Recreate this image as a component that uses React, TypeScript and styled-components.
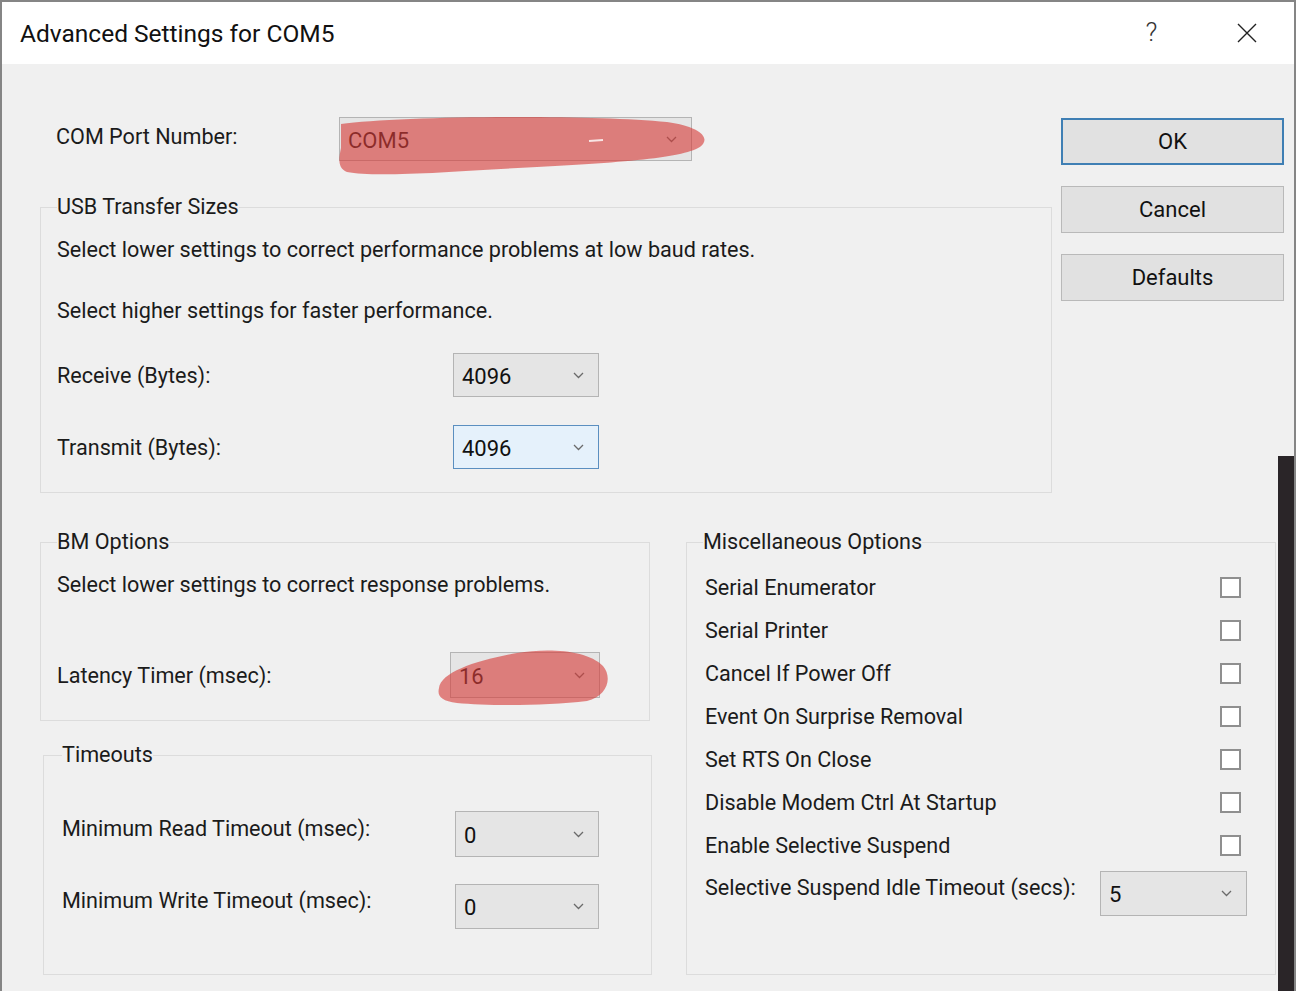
import React from "react";
import styled, { createGlobalStyle } from "styled-components";

const GlobalStyle = createGlobalStyle`
  html, body {
    margin: 0;
    padding: 0;
    background: #f0f0f0;
  }
  body {
    font-family: Roboto, "Segoe UI", "Noto Sans", sans-serif;
    color: #1b1b1b;
  }
  * {
    box-sizing: border-box;
  }
`;

const miscOptions = [
  "Serial Enumerator",
  "Serial Printer",
  "Cancel If Power Off",
  "Event On Surprise Removal",
  "Set RTS On Close",
  "Disable Modem Ctrl At Startup",
  "Enable Selective Suspend",
];

const Chevron = () => (
  <svg width="11" height="7" viewBox="0 0 11 7">
    <path d="M1 1 L5.5 5.5 L10 1" fill="none" stroke="#6a6a6a" strokeWidth="1.3" />
  </svg>
);

// red marker scribbles someone drew over the screenshot
const ComScribble = () => (
  <ScribbleSvg width="372" height="66" viewBox="0 0 372 66" style={{ left: -3, top: -4 }}>
    <path
      d="M4 10 C60 2, 250 0, 330 8 C360 12, 372 22, 366 30 C358 42, 300 48, 200 53 C120 57, 40 64, 10 58 C0 54, 2 44, 4 34 Z"
      fill="rgba(214, 62, 58, 0.62)"
    />
    <path d="M252 27 L266 26" stroke="rgba(255,255,255,0.8)" strokeWidth="2" />
  </ScribbleSvg>
);

const LatencyScribble = () => (
  <ScribbleSvg width="174" height="60" viewBox="0 0 174 60" style={{ left: -14, top: -5 }}>
    <path
      d="M2 40 C4 24, 40 12, 80 5 C112 0, 150 2, 166 18 C176 30, 170 48, 150 53 C110 58, 50 58, 20 55 C4 53, 0 48, 2 40 Z"
      fill="rgba(214, 62, 58, 0.62)"
    />
  </ScribbleSvg>
);

const Combo: React.FC<{ value: string; width: number; height?: number; focused?: boolean; children?: React.ReactNode }> = ({
  value,
  width,
  height = 44,
  focused,
  children,
}) => (
  <ComboBox $w={width} $h={height} $focused={focused}>
    <ComboValue>{value}</ComboValue>
    <Chevron />
    {children}
  </ComboBox>
);

const App: React.FC = () => {
  return (
    <>
      <GlobalStyle />
      <Window>
        <TitleBar>
          <Title>Advanced Settings for COM5</Title>
          <TitleButtons>
            <TitleButton>
              <HelpGlyph>?</HelpGlyph>
            </TitleButton>
            <TitleButton>
              <svg width="20" height="20" viewBox="0 0 20 20">
                <path d="M1 1 L19 19 M19 1 L1 19" stroke="#222" strokeWidth="1.4" />
              </svg>
            </TitleButton>
          </TitleButtons>
        </TitleBar>

        <Body>
          <TopSection>
            <LeftTop>
              <ComRow>
                <Label $w={283} $lift={-6}>COM Port Number:</Label>
                <Combo value="COM5" width={353}>
                  <ComScribble />
                </Combo>
              </ComRow>

              <Group $mt={32} $pt={15} $pb={23}>
                <Legend>USB Transfer Sizes</Legend>
                <TextLine>Select lower settings to correct performance problems at low baud rates.</TextLine>
                <TextLine $mt={33}>Select higher settings for faster performance.</TextLine>
                <FieldRow $mt={28}>
                  <Label $w={396}>Receive (Bytes):</Label>
                  <Combo value="4096" width={146} />
                </FieldRow>
                <FieldRow $mt={28}>
                  <Label $w={396}>Transmit (Bytes):</Label>
                  <Combo value="4096" width={146} focused />
                </FieldRow>
              </Group>
            </LeftTop>

            <ButtonColumn>
              <DialogButton $primary>OK</DialogButton>
              <DialogButton>Cancel</DialogButton>
              <DialogButton>Defaults</DialogButton>
            </ButtonColumn>
          </TopSection>

          <BottomSection>
            <LeftBottom>
              <Group $w={610} $pt={15} $pb={22}>
                <Legend>BM Options</Legend>
                <TextLine>Select lower settings to correct response problems.</TextLine>
                <FieldRow $mt={53}>
                  <Label $w={393}>Latency Timer (msec):</Label>
                  <Combo value="16" width={150} height={46}>
                    <LatencyScribble />
                  </Combo>
                </FieldRow>
              </Group>

              <Group $w={609} $ml={3} $mt={20} $pl={18} $pt={42} $pb={45}>
                <Legend>Timeouts</Legend>
                <FieldRow>
                  <Label $w={393} $lift={-12}>Minimum Read Timeout (msec):</Label>
                  <Combo value="0" width={144} height={46} />
                </FieldRow>
                <FieldRow $mt={27}>
                  <Label $w={393} $lift={-12}>Minimum Write Timeout (msec):</Label>
                  <Combo value="0" width={144} height={45} />
                </FieldRow>
              </Group>
            </LeftBottom>

            <Group $w={590} $ml={34} $pl={18} $pr={28} $pt={10} $pb={58}>
              <Legend $shift={-2}>Miscellaneous Options</Legend>
              {miscOptions.map((opt) => (
                <CheckRow key={opt}>
                  <span>{opt}</span>
                  <CheckBox />
                </CheckRow>
              ))}
              <SuspendRow>
                <Label $lift={-12}>Selective Suspend Idle Timeout (secs):</Label>
                <Combo value="5" width={147} height={45} />
              </SuspendRow>
            </Group>
          </BottomSection>
        </Body>

        <DesktopEdge />
      </Window>
    </>
  );
};

const Window = styled.div`
  position: relative;
  width: 1296px;
  height: 991px;
  overflow: hidden;
  display: flex;
  flex-direction: column;
  background: #f0f0f0;
  border: 2px solid #858585;
  border-bottom: none;
`;

const TitleBar = styled.div`
  height: 62px;
  flex-shrink: 0;
  display: flex;
  align-items: center;
  background: #ffffff;
  padding-left: 18px;
`;

const Title = styled.div`
  font-size: 24.5px;
  color: #111;
`;

const TitleButtons = styled.div`
  margin-left: auto;
  display: flex;
  height: 100%;
`;

const TitleButton = styled.div`
  width: 95px;
  height: 100%;
  display: flex;
  align-items: center;
  justify-content: center;
`;

const HelpGlyph = styled.span`
  font-size: 26px;
  font-weight: 300;
  color: #333;
  margin-top: -2px;
`;

const Body = styled.div`
  flex: 1;
  display: flex;
  flex-direction: column;
  padding-left: 38px;
`;

const TopSection = styled.div`
  display: flex;
  align-items: flex-start;
  padding-top: 53px;
`;

const LeftTop = styled.div`
  width: 1012px;
  display: flex;
  flex-direction: column;
`;

const ComRow = styled.div`
  height: 44px;
  display: flex;
  align-items: center;
  padding-left: 16px;
`;

const Label = styled.div<{ $w?: number; $lift?: number }>`
  width: ${(p) => (p.$w ? `${p.$w}px` : "auto")};
  flex-shrink: 0;
  font-size: 21.6px;
  margin-top: ${(p) => p.$lift ?? 0}px;
`;

const ComboBox = styled.div<{ $w: number; $h: number; $focused?: boolean }>`
  position: relative;
  width: ${(p) => p.$w}px;
  height: ${(p) => p.$h}px;
  display: flex;
  align-items: center;
  justify-content: space-between;
  padding: 0 14px 0 8px;
  background: ${(p) => (p.$focused ? "#e5f1fb" : "#e5e5e5")};
  border: 1px solid ${(p) => (p.$focused ? "#5b8fc0" : "#b4b4b4")};
  font-size: 22px;
  color: #111;
`;

const ComboValue = styled.span`
  padding-top: 2px;
`;

const ScribbleSvg = styled.svg`
  position: absolute;
  pointer-events: none;
`;

const Group = styled.fieldset<{ $w?: number; $ml?: number; $mt?: number; $pl?: number; $pr?: number; $pt?: number; $pb?: number }>`
  margin: ${(p) => p.$mt ?? 0}px 0 0 ${(p) => p.$ml ?? 0}px;
  width: ${(p) => (p.$w ? `${p.$w}px` : "auto")};
  min-width: 0;
  border: 1px solid #dcdcdc;
  padding: ${(p) => p.$pt ?? 0}px ${(p) => p.$pr ?? 16}px ${(p) => p.$pb ?? 0}px ${(p) => p.$pl ?? 16}px;
  display: flex;
  flex-direction: column;
`;

const Legend = styled.legend<{ $shift?: number }>`
  padding: 0;
  margin-left: ${(p) => p.$shift ?? 0}px;
  font-size: 21.6px;
  line-height: 28px;
`;

const TextLine = styled.div<{ $mt?: number }>`
  margin-top: ${(p) => p.$mt ?? 0}px;
  font-size: 21.6px;
  line-height: 28px;
`;

const FieldRow = styled.div<{ $mt?: number }>`
  margin-top: ${(p) => p.$mt ?? 0}px;
  display: flex;
  align-items: center;
`;

const ButtonColumn = styled.div`
  margin: 1px 0 0 9px;
  width: 223px;
  display: flex;
  flex-direction: column;
  gap: 21px;
`;

const DialogButton = styled.div<{ $primary?: boolean }>`
  height: 47px;
  display: flex;
  align-items: center;
  justify-content: center;
  background: #e1e1e1;
  border: ${(p) => (p.$primary ? "2px solid #3f7fb4" : "1px solid #b9b9b9")};
  font-size: 22px;
  color: #111;
`;

const BottomSection = styled.div`
  display: flex;
  align-items: flex-start;
  margin-top: 35px;
`;

const LeftBottom = styled.div`
  width: 612px;
  display: flex;
  flex-direction: column;
`;

const CheckRow = styled.div`
  height: 43px;
  display: flex;
  align-items: center;
  justify-content: space-between;
  font-size: 21.6px;
`;

const CheckBox = styled.div`
  width: 21px;
  height: 21px;
  margin-right: 6px;
  background: #ffffff;
  border: 2px solid #8f8f8f;
`;

const SuspendRow = styled.div`
  margin-top: 4px;
  height: 45px;
  display: flex;
  align-items: center;
  justify-content: space-between;
`;

const DesktopEdge = styled.div`
  position: absolute;
  right: -2px;
  top: 454px;
  bottom: 0;
  width: 18px;
  background: #2a2528;
`;

export default App;
